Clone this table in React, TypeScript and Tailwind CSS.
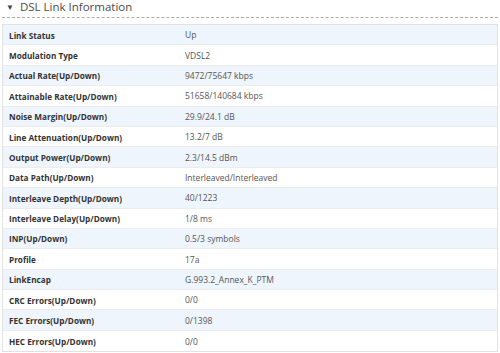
const rows: [string, string][] = [
  ["Link Status", "Up"],
  ["Modulation Type", "VDSL2"],
  ["Actual Rate(Up/Down)", "9472/75647 kbps"],
  ["Attainable Rate(Up/Down)", "51658/140684 kbps"],
  ["Noise Margin(Up/Down)", "29.9/24.1 dB"],
  ["Line Attenuation(Up/Down)", "13.2/7 dB"],
  ["Output Power(Up/Down)", "2.3/14.5 dBm"],
  ["Data Path(Up/Down)", "Interleaved/Interleaved"],
  ["Interleave Depth(Up/Down)", "40/1223"],
  ["Interleave Delay(Up/Down)", "1/8 ms"],
  ["INP(Up/Down)", "0.5/3 symbols"],
  ["Profile", "17a"],
  ["LinkEncap", "G.993.2_Annex_K_PTM"],
  ["CRC Errors(Up/Down)", "0/0"],
  ["FEC Errors(Up/Down)", "0/1398"],
  ["HEC Errors(Up/Down)", "0/0"],
];

export default function App() {
  return (
    <div
      className="h-[353px] w-[500px] overflow-hidden bg-white"
      style={{ fontFamily: '"Open Sans", "Noto Sans", sans-serif' }}
    >
      <div className="mx-[2px] flex h-[18px] items-start border-b border-dashed border-[#aaa] pl-[4px]">
        <span className="mr-[6px] text-[8px] leading-[14px] text-[#444]">▼</span>
        <span className="text-[11.5px] leading-[14px] text-[#4a4a4a]">
          DSL Link Information
        </span>
      </div>
      <div className="mx-[2px] mt-[6px] w-[496px] border border-[#e2e2e2]">
        {rows.map(([label, value], i) => (
          <div
            key={label}
            className={`flex h-[20.4px] items-center border-b border-[#ececec] pt-[2px] last:border-b-0 ${
              i % 2 === 0 ? "bg-[#eef5fc]" : "bg-white"
            }`}
          >
            <div className="w-[182px] shrink-0 pl-[6px] text-[8.2px] font-bold text-[#333]">
              {label}
            </div>
            <div className="text-[8.5px] text-[#555]">{value}</div>
          </div>
        ))}
      </div>
    </div>
  );
}
